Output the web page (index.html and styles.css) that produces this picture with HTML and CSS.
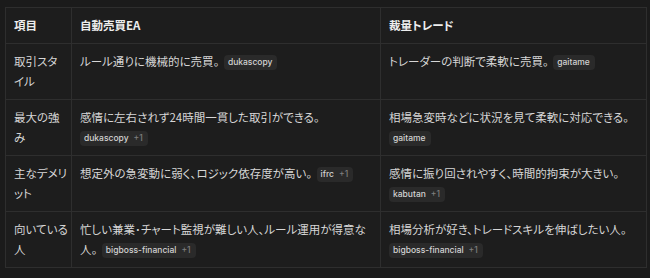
FILE: index.html
```html
<!DOCTYPE html>
<html lang="ja">
<head>
<meta charset="utf-8">
<link rel="stylesheet" href="styles.css">
</head>
<body>
<table class="cmp">
  <colgroup>
    <col class="c1">
    <col class="c2">
    <col class="c3">
  </colgroup>
  <thead>
    <tr><th>項目</th><th>自動売買EA</th><th>裁量トレード</th></tr>
  </thead>
  <tbody>
    <tr>
      <td class="label">取引スタ<br>イル</td>
      <td>ルール通りに機械的に売買。 <span class="chip">dukascopy</span></td>
      <td>トレーダーの判断で柔軟に売買。 <span class="chip">gaitame</span></td>
    </tr>
    <tr>
      <td class="label">最大の強<br>み</td>
      <td>感情に左右されず24時間一貫した取引ができる。 <span class="chip">dukascopy<span class="more">+1</span></span></td>
      <td>相場急変時などに状況を見て柔軟に対応できる。 <span class="chip">gaitame</span></td>
    </tr>
    <tr>
      <td class="label">主なデメリ<br>ット</td>
      <td>想定外の急変動に弱く、ロジック依存度が高い。 <span class="chip">ifrc<span class="more">+1</span></span></td>
      <td>感情に振り回されやすく、時間的拘束が大きい。 <span class="chip">kabutan<span class="more">+1</span></span></td>
    </tr>
    <tr>
      <td class="label">向いている<br>人</td>
      <td>忙しい兼業･チャート監視が難しい人、ルール運用が得意な人。 <span class="chip">bigboss-financial<span class="more">+1</span></span></td>
      <td>相場分析が好き、トレードスキルを伸ばしたい人。 <span class="chip">bigboss-financial<span class="more">+1</span></span></td>
    </tr>
  </tbody>
</table>
</body>
</html>
```
FILE: styles.css
```css
html, body {
  margin: 0;
  background: #1b1b1b;
}
body {
  padding: 7px 0 0 5px;
  font-family: "Noto Sans CJK JP", "Noto Sans", sans-serif;
  color: #d6d6d6;
}
.cmp {
  border-collapse: collapse;
  table-layout: fixed;
  width: 641px;
  background: #1d1d1d;
  font-size: 11.5px;
  line-height: 20px;
  font-feature-settings: "palt";
}
.c1 { width: 66px; }
.c2 { width: 309px; }
.c3 { width: 266px; }
.cmp th, .cmp td {
  border: 1px solid #2e2e2e;
  padding: 7px 8px 8px 8px;
  text-align: left;
  vertical-align: top;
  word-spacing: 2px;
}
.cmp td.label {
  padding-right: 2px;
  white-space: nowrap;
}
.cmp th {
  font-weight: 700;
  color: #ededed;
}
.chip {
  display: inline-flex;
  align-items: center;
  gap: 5px;
  height: 15px;
  padding: 0 5px 0 4px;
  border-radius: 4px;
  background: #2a2a2a;
  color: #d2d2d2;
  font-family: Inter, "Liberation Sans", sans-serif;
  font-size: 8.5px;
  font-weight: 500;
  line-height: 15px;
  vertical-align: 1px;
  word-spacing: normal;
  font-feature-settings: normal;
}
.more {
  color: #7e7e7e;
}
```
